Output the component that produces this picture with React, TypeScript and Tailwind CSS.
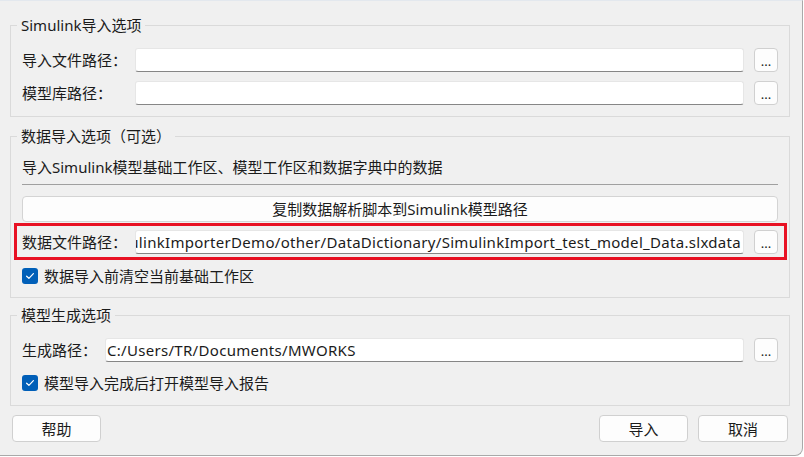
import React from 'react';

const DotsButton: React.FC = () => (
  <button className="ml-[10px] w-[24px] h-[24px] shrink-0 rounded-[4px] border border-[#d0d0d0] bg-[#fdfdfd] text-[13px] leading-[18px] text-[#1b1b1b] flex items-center justify-center pt-[2px]">
    ...
  </button>
);

const PathInput: React.FC<{ value?: string; alignEnd?: boolean }> = ({ value, alignEnd }) => (
  <div
    className={
      'flex-1 min-w-0 h-[24px] bg-white border border-[#e6e6e6] border-b-[#868686] rounded-[3px] flex items-center overflow-hidden whitespace-nowrap ' +
      (alignEnd ? 'justify-end pr-[2px]' : 'pl-[1px]')
    }
  >
    {value && <span className="shrink-0 tracking-[0.3px] text-[#1b1b1b]">{value}</span>}
  </div>
);

const Checkbox: React.FC<{ label: string }> = ({ label }) => (
  <div className="flex items-center gap-[6px]">
    <div className="w-[16px] h-[16px] rounded-[3px] bg-[#005fb8] flex items-center justify-center">
      <svg width="10" height="8" viewBox="0 0 10 8" fill="none">
        <path d="M1.6 4.2 L3.9 6.3 L8.4 1.7" stroke="white" strokeWidth="1.2" strokeLinecap="round" strokeLinejoin="round" />
      </svg>
    </div>
    <span className="whitespace-nowrap">{label}</span>
  </div>
);

const Group: React.FC<{ title: string; className?: string; children: React.ReactNode }> = ({ title, className, children }) => (
  <fieldset className={'min-w-0 border border-[#dadada] pl-[11px] pr-[11px] ' + (className ?? '')}>
    <legend className="-ml-[5px] px-[4px] leading-[20px] whitespace-nowrap">{title}</legend>
    {children}
  </fieldset>
);

export default function App() {
  return (
    <div className="w-[804px] h-[457px] bg-white font-['Noto_Sans','Noto_Sans_CJK_SC',sans-serif] text-[15px] leading-[20px] text-[#1b1b1b]">
      <div className="w-[803px] h-[456px] bg-[#f0f0f0] border-t border-t-[#e3e8ee] border-r border-b border-[#a9a9a9] rounded-br-[8px] pt-[14px] pl-[10px] pr-[12px] flex flex-col">
        <Group title="Simulink导入选项" className="pt-[13px] pb-[11px]">
          <div className="flex flex-col gap-[9px]">
            <div className="flex items-center">
              <span className="w-[113px] shrink-0 whitespace-nowrap">导入文件路径：</span>
              <PathInput />
              <DotsButton />
            </div>
            <div className="flex items-center">
              <span className="w-[113px] shrink-0 whitespace-nowrap">模型库路径：</span>
              <PathInput />
              <DotsButton />
            </div>
          </div>
        </Group>

        <Group title="数据导入选项（可选）" className="mt-[9px] pt-[11px] pb-[11px]">
          <div className="whitespace-nowrap">导入Simulink模型基础工作区、模型工作区和数据字典中的数据</div>
          <div className="mt-[7px] h-px bg-[#a0a0a0]" />
          <button className="mt-[11px] w-full h-[26px] rounded-[4px] border border-[#d4d4d4] bg-[#fdfdfd] flex items-center justify-center">
            复制数据解析脚本到Simulink模型路径
          </button>
          <div className="mt-[1px] -ml-[8px] -mr-[9px] border-[3px] border-[#e81123] pl-[5px] pr-[6px] pt-[4px] pb-[3px] flex items-center">
            <span className="w-[113px] shrink-0 whitespace-nowrap">数据文件路径：</span>
            <PathInput value="E:/MWORKS/SimulinkImporterDemo/other/DataDictionary/SimulinkImport_test_model_Data.slxdata" alignEnd />
            <DotsButton />
          </div>
          <div className="mt-[6px]">
            <Checkbox label="数据导入前清空当前基础工作区" />
          </div>
        </Group>

        <Group title="模型生成选项" className="mt-[7px] pt-[13px] pb-[12px]">
          <div className="flex items-center">
            <span className="w-[83px] shrink-0 whitespace-nowrap">生成路径：</span>
            <PathInput value="C:/Users/TR/Documents/MWORKS" />
            <DotsButton />
          </div>
          <div className="mt-[11px]">
            <Checkbox label="模型导入完成后打开模型导入报告" />
          </div>
        </Group>

        <div className="mt-[9px] pl-[2px] pr-[2px] flex items-center">
          <button className="w-[89px] h-[27px] rounded-[4px] border border-[#d0d0d0] bg-[#fdfdfd]">帮助</button>
          <div className="flex-1" />
          <button className="w-[89px] h-[27px] rounded-[4px] border border-[#d0d0d0] bg-[#fdfdfd]">导入</button>
          <button className="ml-[10px] w-[90px] h-[27px] rounded-[4px] border border-[#d0d0d0] bg-[#fdfdfd]">取消</button>
        </div>
      </div>
    </div>
  );
}
